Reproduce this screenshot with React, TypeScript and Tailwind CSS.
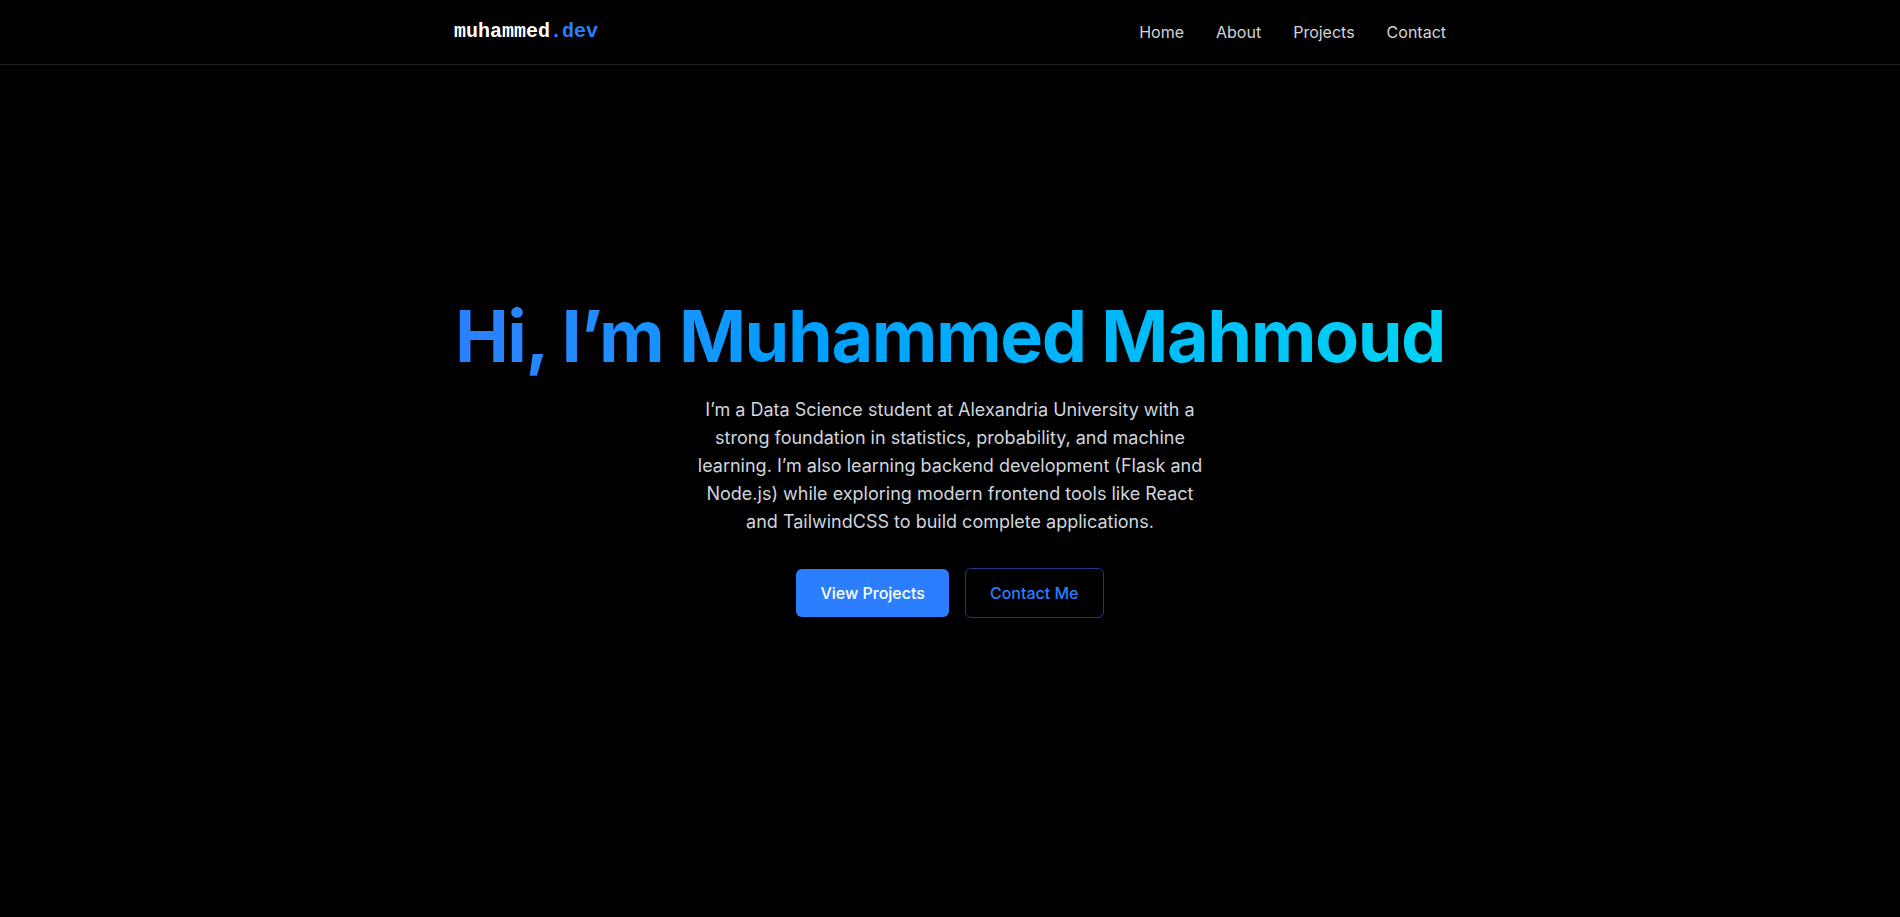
import React from 'react';

const links = ['Home', 'About', 'Projects', 'Contact'];

const Navbar: React.FC = () => (
  <nav className="fixed top-0 left-0 right-0 z-50 bg-black border-b border-[#1f1f1f]">
    <div className="max-w-5xl mx-auto h-16 px-4 flex items-center justify-between">
      <a href="#" className="text-xl font-bold text-white font-['Liberation_Mono',monospace]">
        muhammed<span className="text-blue-500">.dev</span>
      </a>
      <ul className="flex items-center gap-8 text-base text-gray-300">
        {links.map((l) => (
          <li key={l}>
            <a href={`#${l.toLowerCase()}`} className="hover:text-white transition-colors">
              {l}
            </a>
          </li>
        ))}
      </ul>
    </div>
  </nav>
);

export default function App() {
  return (
    <div className="min-h-screen bg-black text-white font-['Inter',sans-serif]">
      <Navbar />
      <section id="home" className="h-screen flex items-center justify-center px-4">
        <div className="w-full max-w-5xl mx-auto flex flex-col items-center text-center">
          <h1 className="text-7xl font-bold leading-none tracking-[-0.02em] whitespace-nowrap mb-5 pb-1 bg-linear-to-r from-blue-500 to-cyan-400 bg-clip-text text-transparent">
            Hi, I’m Muhammed Mahmoud
          </h1>
          <p className="max-w-lg text-lg text-gray-300 mb-8">
            I’m a Data Science student at Alexandria University with a strong foundation in statistics,
            probability, and machine learning. I’m also learning backend development (Flask and Node.js)
            while exploring modern frontend tools like React and TailwindCSS to build complete applications.
          </p>
          <div className="flex items-center gap-4">
            <a href="#projects" className="px-6 py-3 rounded-md bg-blue-500 text-white font-medium">
              View Projects
            </a>
            <a href="#contact" className="px-6 py-3 rounded-md border border-blue-900 text-blue-500 font-medium">
              Contact Me
            </a>
          </div>
        </div>
      </section>
    </div>
  );
}
